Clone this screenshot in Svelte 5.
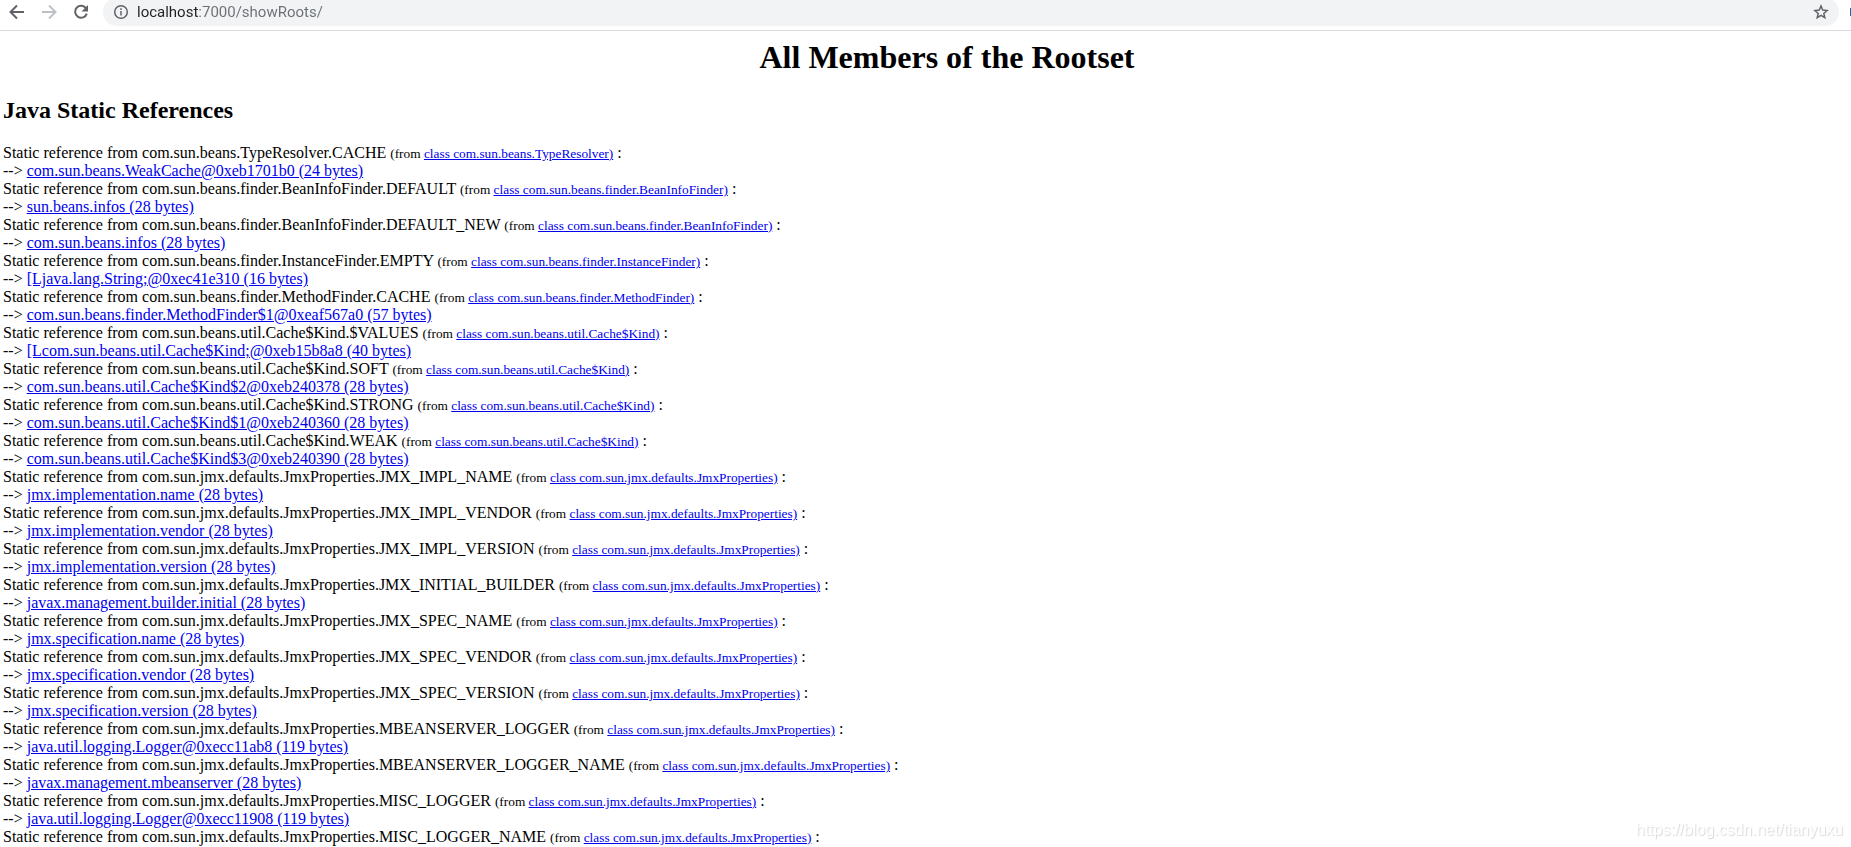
<script>
  const jmx = 'com.sun.jmx.defaults.JmxProperties';
  const kind = 'com.sun.beans.util.Cache$Kind';
  const info = 'com.sun.beans.finder.BeanInfoFinder';

  const roots = [
    { cls: 'com.sun.beans.TypeResolver', field: 'CACHE', target: 'com.sun.beans.WeakCache@0xeb1701b0 (24 bytes)' },
    { cls: info, field: 'DEFAULT', target: 'sun.beans.infos (28 bytes)' },
    { cls: info, field: 'DEFAULT_NEW', target: 'com.sun.beans.infos (28 bytes)' },
    { cls: 'com.sun.beans.finder.InstanceFinder', field: 'EMPTY', target: '[Ljava.lang.String;@0xec41e310 (16 bytes)' },
    { cls: 'com.sun.beans.finder.MethodFinder', field: 'CACHE', target: 'com.sun.beans.finder.MethodFinder$1@0xeaf567a0 (57 bytes)' },
    { cls: kind, field: '$VALUES', target: '[Lcom.sun.beans.util.Cache$Kind;@0xeb15b8a8 (40 bytes)' },
    { cls: kind, field: 'SOFT', target: 'com.sun.beans.util.Cache$Kind$2@0xeb240378 (28 bytes)' },
    { cls: kind, field: 'STRONG', target: 'com.sun.beans.util.Cache$Kind$1@0xeb240360 (28 bytes)' },
    { cls: kind, field: 'WEAK', target: 'com.sun.beans.util.Cache$Kind$3@0xeb240390 (28 bytes)' },
    { cls: jmx, field: 'JMX_IMPL_NAME', target: 'jmx.implementation.name (28 bytes)' },
    { cls: jmx, field: 'JMX_IMPL_VENDOR', target: 'jmx.implementation.vendor (28 bytes)' },
    { cls: jmx, field: 'JMX_IMPL_VERSION', target: 'jmx.implementation.version (28 bytes)' },
    { cls: jmx, field: 'JMX_INITIAL_BUILDER', target: 'javax.management.builder.initial (28 bytes)' },
    { cls: jmx, field: 'JMX_SPEC_NAME', target: 'jmx.specification.name (28 bytes)' },
    { cls: jmx, field: 'JMX_SPEC_VENDOR', target: 'jmx.specification.vendor (28 bytes)' },
    { cls: jmx, field: 'JMX_SPEC_VERSION', target: 'jmx.specification.version (28 bytes)' },
    { cls: jmx, field: 'MBEANSERVER_LOGGER', target: 'java.util.logging.Logger@0xecc11ab8 (119 bytes)' },
    { cls: jmx, field: 'MBEANSERVER_LOGGER_NAME', target: 'javax.management.mbeanserver (28 bytes)' },
    { cls: jmx, field: 'MISC_LOGGER', target: 'java.util.logging.Logger@0xecc11908 (119 bytes)' },
    { cls: jmx, field: 'MISC_LOGGER_NAME', target: null }
  ];
</script>

<header class="toolbar">
  <nav class="history">
    <button aria-label="Back">
      <svg viewBox="0 0 16 16"><path d="M15 8H2M8 1.5 1.5 8 8 14.5" /></svg>
    </button>
    <button aria-label="Forward" class="off" disabled>
      <svg viewBox="0 0 16 16"><path d="M1 8h13M8 1.5 14.5 8 8 14.5" /></svg>
    </button>
    <button aria-label="Reload">
      <svg viewBox="0 0 16 16"><path d="M13.2 4.6A6 6 0 1 0 13.8 9.6" /><path class="solid" d="M15 1v6.5H8.5z" /></svg>
    </button>
  </nav>
  <form class="address">
    <button type="button" aria-label="Site information">
      <svg viewBox="0 0 16 16"><circle cx="8" cy="8" r="6.3" /><path d="M8 7v4.5M8 4.3v1.8" /></svg>
    </button>
    <input type="text" aria-label="Address" value="localhost:7000/showRoots/" spellcheck="false" />
    <button type="button" aria-label="Bookmark">
      <svg viewBox="0 0 16 16"><path d="M8 2l1.700 4.100 4.400.4-3.300 2.900 1 4.300L8 11.400l-3.800 2.300 1-4.300L1.900 6.500l4.400-.4z" /></svg>
    </button>
  </form>
  <span class="extension"></span>
</header>

<main>
  <h1>All Members of the Rootset</h1>
  <h2>Java Static References</h2>
  {#each roots as r}
    <div>Static reference from {r.cls}.{r.field} <small>(from <a href="#class">class {r.cls})</a></small> :</div>
    {#if r.target}
      <div>--&gt; <a href="#object">{r.target}</a></div>
    {/if}
  {/each}
</main>
<div class="watermark">https://blog.csdn.net/tianyuxu</div>

<style>
  :global(body) {
    background: #fff;
  }
  .toolbar {
    display: flex;
    align-items: center;
    height: 24px;
    padding-bottom: 6px;
    border-bottom: 1px solid #d8dadc;
    overflow: hidden;
  }
  button {
    display: flex;
    padding: 0;
    border: 0;
    background: none;
    color: #5f6368;
  }
  svg {
    width: 16px;
    height: 16px;
    fill: none;
    stroke: currentColor;
    stroke-width: 2;
  }
  .solid {
    fill: currentColor;
    stroke: none;
  }
  .history {
    display: flex;
    gap: 16px;
    padding: 0 14px 0 9px;
  }
  .off {
    color: #bdc1c6;
  }
  .address {
    display: flex;
    flex: 1;
    align-items: center;
    gap: 8px;
    height: 28px;
    padding: 0 10px;
    border-radius: 14px;
    background: #f1f3f4;
  }
  .address svg {
    stroke-width: 1.5;
  }
  input {
    flex: 1;
    min-width: 0;
    height: 24px;
    padding: 0;
    border: 0;
    outline: 0;
    font: 15px/24px Roboto, "Open Sans", sans-serif;
    color: transparent;
    background: linear-gradient(to right, #202124 61px, #6b6f73 61px);
    -webkit-background-clip: text;
    background-clip: text;
  }
  .extension {
    width: 12px;
    height: 8px;
    box-sizing: border-box;
    border-right: 1px solid #1769aa;
  }
  main {
    padding: 8px 3px 0;
    font: 16px/18px "Liberation Serif", "Times New Roman", serif;
    color: #000;
    white-space: nowrap;
  }
  h1 {
    margin: 0 0 20px;
    padding-left: 43px;
    font-size: 32px;
    line-height: 37px;
    text-align: center;
  }
  h2 {
    margin: 0 0 20px;
    font-size: 24px;
    line-height: 28px;
  }
  small {
    font-size: smaller;
    line-height: 1;
  }
  a {
    color: #00e;
    text-decoration: underline;
  }
  .watermark {
    position: fixed;
    right: 8px;
    bottom: 8px;
    font: 16px/18px "Liberation Sans", Arial, sans-serif;
    color: #fff;
    text-shadow: 1px 1px 1px #d8d8d8;
  }
</style>
